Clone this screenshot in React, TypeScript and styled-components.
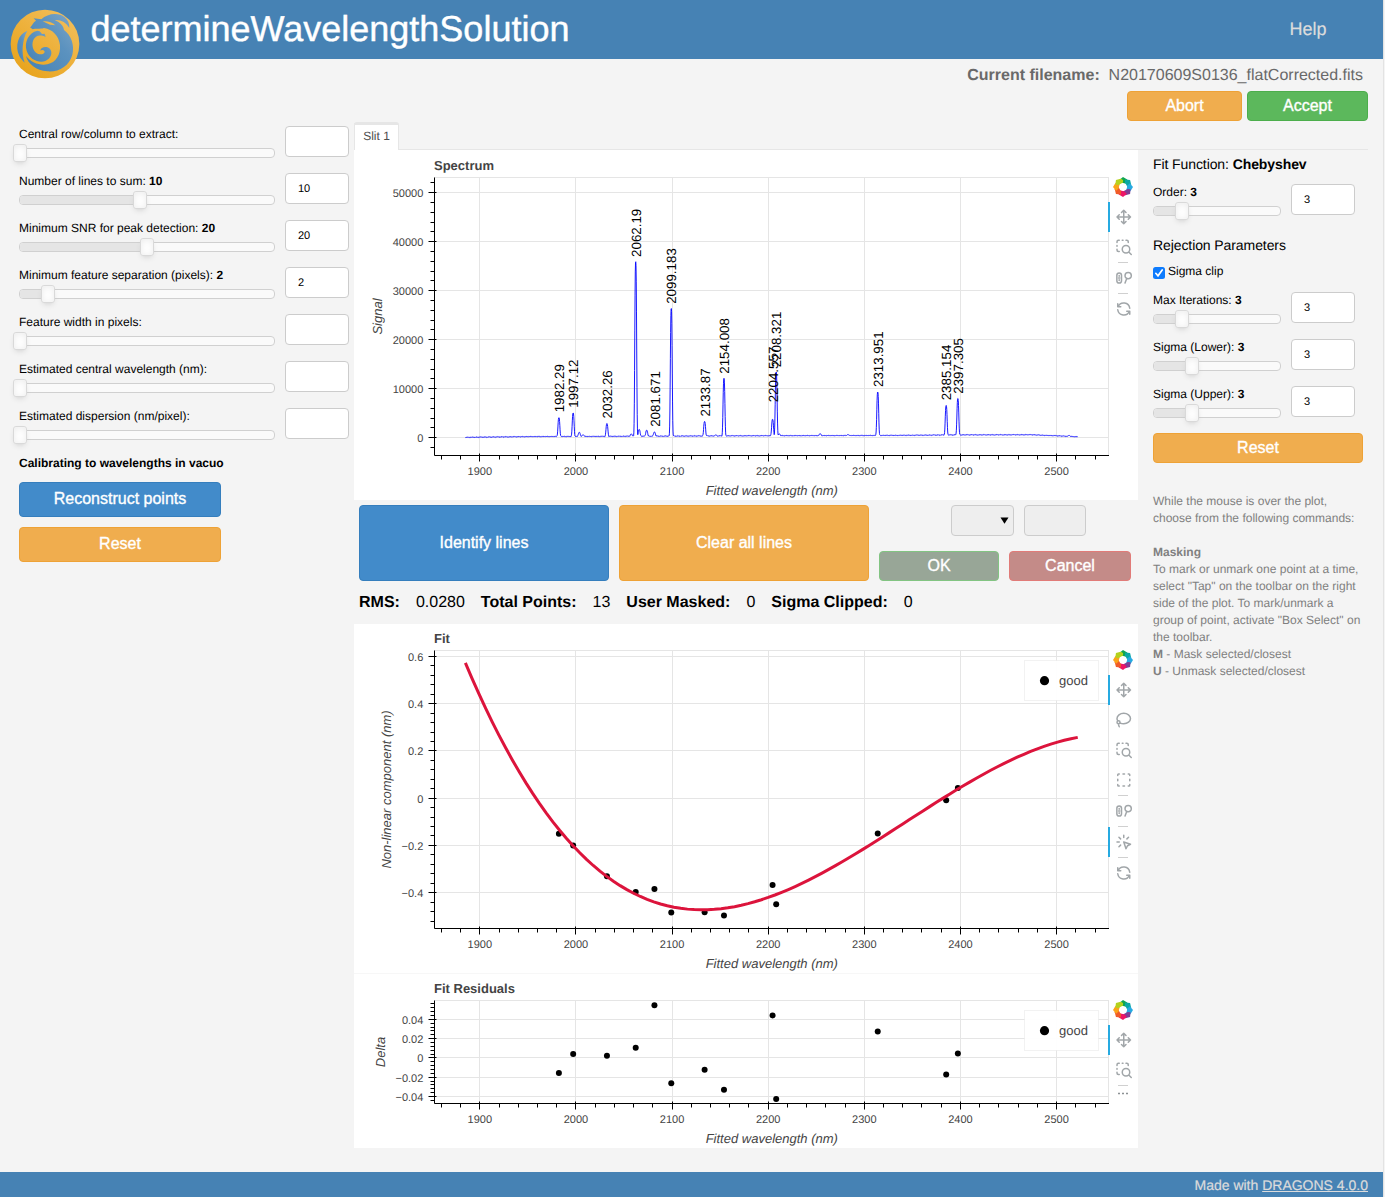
import React from 'react';
import styled, { createGlobalStyle } from 'styled-components';

const GlobalStyle = createGlobalStyle`
  body {
    margin: 0;
    background: #f4f4f4;
    font-family: "Liberation Sans", Arial, Helvetica, sans-serif;
    text-rendering: geometricPrecision;
  }
  *, *::before, *::after { box-sizing: border-box; }
`;

/* ---------- page shell ---------- */

const Page = styled.div`
  display: flex;
  flex-direction: column;
  width: 1384px;
  height: 1197px;
  border-right: 1px solid #e3e3e3;
  background: #f4f4f4;
  color: #000;
  font-size: 12px;
`;

const Header = styled.header`
  display: flex;
  align-items: flex-start;
  height: 59px;
  flex: none;
  padding: 9px 56.5px 0 10px;
  background: #4682b4;
`;

const Title = styled.h1`
  flex: 1;
  margin: 0 0 0 10.5px;
  font-size: 36px;
  font-weight: 400;
  line-height: 40px;
  color: #fff;
  -webkit-text-stroke: 0.4px #fff;
`;

const HelpLink = styled.a`
  font-size: 18px;
  line-height: 40px;
  color: #dcdcdc;
  -webkit-text-stroke: 0.2px #dcdcdc;
`;

const FileBar = styled.div`
  display: flex;
  justify-content: flex-end;
  flex: none;
  height: 32px;
  padding: 1px 20px 0 0;
  font-size: 16px;
  line-height: 31px;
  color: #696969;
  white-space: pre;
`;

const Actions = styled.div`
  display: flex;
  justify-content: flex-end;
  flex: none;
  gap: 5px;
  padding-right: 15px;
`;

const Main = styled.main`
  display: flex;
  flex: 1;
  min-height: 0;
`;

const Footer = styled.footer`
  flex: none;
  height: 25px;
  padding-right: 15px;
  background: #4682b4;
  color: #dcdcdc;
  font-size: 14px;
  line-height: 26px;
  text-align: right;
  -webkit-text-stroke: 0.2px #dcdcdc;
`;

const FooterLink = styled.a`
  text-decoration: underline;
`;

/* ---------- buttons and inputs ---------- */

type Tone = 'primary' | 'warning' | 'success' | 'mutedOk' | 'mutedCancel';

const tones: Record<Tone, [string, string]> = {
  primary: ['#428bca', '#357ebd'],
  warning: ['#f0ad4e', '#eea236'],
  success: ['#5cb85c', '#4cae4c'],
  mutedOk: ['#98a697', '#82c482'],
  mutedCancel: ['#c48b88', '#e17b78'],
};

const Button = styled.button<{ $tone: Tone; $w: number; $h: number }>`
  width: ${(p) => p.$w}px;
  height: ${(p) => p.$h}px;
  padding: 0 0 ${(p) => (p.$h % 2 ? 2 : 0)}px;
  border: 1px solid ${(p) => tones[p.$tone][1]};
  border-radius: 4px;
  background: ${(p) => tones[p.$tone][0]};
  color: #fff;
  font-family: inherit;
  font-size: 16px;
  line-height: 1;
  -webkit-text-stroke: 0.35px #fff;
`;

const Field = styled.div<{ $w?: number; $disabled?: boolean }>`
  display: flex;
  align-items: center;
  width: ${(p) => p.$w ?? 64}px;
  height: 31px;
  padding: 0 12px;
  border: 1px solid #ccc;
  border-radius: 4px;
  background: ${(p) => (p.$disabled ? '#eee' : '#fff')};
  font-size: 11px;
`;

const SelectField = styled(Field)`
  justify-content: flex-end;
  padding-right: 4.5px;
`;

/* ---------- sliders ---------- */

const SliderRow = styled.div`
  display: flex;
  gap: 10px;
  height: 47px;
`;

const SliderBox = styled.div<{ $w: number }>`
  width: ${(p) => p.$w}px;
`;

const SliderLabel = styled.div`
  height: 22px;
  line-height: 16px;
  white-space: nowrap;
`;

const Track = styled.div`
  position: relative;
  height: 10px;
  border: 1px solid #d0d0d0;
  border-radius: 4px;
  background: #fafafa;
`;

const Filled = styled.div`
  height: 8px;
  border-radius: 3px 0 0 3px;
  background: #e5e5e5;
`;

const Handle = styled.div`
  position: absolute;
  top: -5px;
  width: 14px;
  height: 18px;
  margin-left: -7px;
  border: 1px solid #d9d9d9;
  border-radius: 3px;
  background: #fff;
  box-shadow: inset 0 0 1px #fff, inset 0 1px 7px #ebebeb, 0 3px 6px -3px #bbb;
`;

interface SliderProps {
  label: string;
  value?: string;
  width?: number;
  at?: number;
}

function Slider({ label, value, width = 256, at = 0 }: SliderProps) {
  return (
    <SliderRow>
      <SliderBox $w={width}>
        <SliderLabel>
          {label} {value && <b>{value}</b>}
        </SliderLabel>
        <Track>
          <Filled style={{ width: at }} />
          <Handle style={{ left: at }} />
        </Track>
      </SliderBox>
      <Field>{value}</Field>
    </SliderRow>
  );
}

/* ---------- columns ---------- */

const LeftColumn = styled.section`
  width: 354px;
  padding: 5px 0 0 19px;
`;

const Notice = styled.div`
  height: 27px;
  line-height: 16px;
  font-weight: 700;
`;

const Stack = styled.div<{ $gap: number }>`
  display: flex;
  flex-direction: column;
  gap: ${(p) => p.$gap}px;
`;

const Content = styled.section`
  width: 1014px;
`;

const TabBar = styled.div`
  display: flex;
  height: 29px;
  padding-top: 1px;
  border-bottom: 1px solid #e6e6e6;
`;

const Tab = styled.div`
  width: 45px;
  height: 28px;
  border: 1px solid #e6e6e6;
  border-top-width: 3px;
  border-bottom: 0;
  border-radius: 3px 3px 0 0;
  background: #fff;
  color: #4d4d4d;
  line-height: 22px;
  text-align: center;
`;

const TabBody = styled.div`
  display: flex;
`;

const Plots = styled.div`
  width: 784px;
`;

const RightColumn = styled.aside`
  width: 230px;
  padding: 6px 0 0 15px;
`;

const Heading = styled.div<{ $h: number; $top?: number }>`
  height: ${(p) => p.$h}px;
  margin-top: ${(p) => p.$top ?? 0}px;
  font-size: 14px;
  line-height: 17px;
  letter-spacing: -0.09px;
`;

const CheckRow = styled.label`
  display: flex;
  align-items: flex-start;
  gap: 3px;
  height: 29px;
  line-height: 16px;
`;

const CheckMark = styled.span`
  display: flex;
  width: 12px;
  height: 12px;
  margin-top: 4px;
  border-radius: 2.5px;
  background: #0d7bfd;
`;

const Hints = styled.div`
  margin-top: 30px;
  width: 212px;
  color: #808080;
  line-height: 17px;
`;

const EditRow = styled.div`
  display: flex;
  gap: 10px;
  padding: 5px;
  height: 86px;
`;

const EditPanel = styled.div`
  display: flex;
  flex-direction: column;
  justify-content: space-between;
  width: 252px;
`;

const EditFields = styled.div`
  display: flex;
  gap: 10px;
  padding-left: 72px;
`;

const EditButtons = styled.div`
  display: flex;
  gap: 10px;
`;

const Stats = styled.div`
  display: flex;
  gap: 16px;
  height: 38px;
  padding-left: 5px;
  font-size: 16px;
  line-height: 34px;
`;

/* ---------- chart toolbar ---------- */

const PlotPanel = styled.div<{ $h: number; $line?: boolean }>`
  display: flex;
  height: ${(p) => p.$h}px;
  background: #fff;
  border-bottom: ${(p) => (p.$line ? '1px solid #f7f7f7' : '0')};
`;

const PlotCanvas = styled.svg`
  flex: none;
  overflow: visible;
`;

const Toolbar = styled.div<{ $top: number }>`
  display: flex;
  flex-direction: column;
  align-items: center;
  width: 30px;
  padding-top: ${(p) => p.$top}px;
  z-index: 1;
`;

const ToolButton = styled.div<{ $active?: boolean }>`
  display: flex;
  align-items: center;
  justify-content: center;
  width: 30px;
  height: 30px;
  padding-right: ${(p) => (p.$active ? 2 : 0)}px;
  border-left: ${(p) => (p.$active ? '2px solid #26aae1' : '0')};
`;

const ToolRule = styled.div`
  width: 10px;
  height: 1px;
  background: #d0d0d0;
`;

type Tool = 'pan' | 'lasso' | 'boxZoom' | 'boxSelect' | 'wheel' | 'tap' | 'reset' | 'rule' | 'more';

const toolPaths: Record<string, string> = {
  pan: 'M18 9l3 3l-3 3M3 12h18M6 9l-3 3l3 3M9 18l3 3l3-3M12 3v18M15 6l-3-3l-3 3',
  lasso:
    'M4.03 13.25C3.37 12.28 3 11.17 3 10c0-3.87 4.03-7 9-7s9 3.13 9 7s-4.03 7-9 7c-1.91 0-3.69-.46-5.14-1.26M3 15a2 2 0 1 0 4 0a2 2 0 1 0-4 0M5 17c0 1.42.32 2.8 1 4',
  boxZoom:
    'M10 15a5 5 0 1 0 10 0a5 5 0 1 0-10 0M22 22l-3-3M6 18h-1a2 2 0 0 1-2-2v-1M3 11v-1M3 6v-1a2 2 0 0 1 2-2h1M10 3h1M15 3h1a2 2 0 0 1 2 2v1',
  boxSelect:
    'M4 6v-1a1 1 0 0 1 1-1h1M11 4h2M18 4h1a1 1 0 0 1 1 1v1M20 11v2M20 18v1a1 1 0 0 1-1 1h-1M13 20h-2M6 20h-1a1 1 0 0 1-1-1v-1M4 13v-2',
  wheel:
    'M2.8 8.4a3.1 3.1 0 0 1 6.2 0v7.2a3.1 3.1 0 0 1-6.2 0zM5.9 8.6v1M5.9 14.4v1M5.2 12h1.4M13.7 8.9a4.2 4.2 0 1 0 8.4 0a4.2 4.2 0 1 0-8.4 0M16 12.8l-2.3 6',
  tap: 'M3 12h3M12 3v3M7.8 7.8l-2.2-2.2M16.2 7.8l2.2-2.2M7.8 16.2l-2.2 2.2M12 12l9 3l-4 2l-2 4z',
  reset: 'M20 11a8.1 8.1 0 0 0-15.5-2M4 5v4h4M4 13a8.1 8.1 0 0 0 15.5 2M20 19v-4h-4',
};

const petals = ['#10a650', '#0ba8a4', '#26aae1', '#803c96', '#ed1566', '#f05a28', '#faa41a', '#b4d21e'];

function RingLogo() {
  return (
    <svg width="20" height="20" viewBox="-10 -10 20 20">
      {petals.map((fill, i) => (
        <polygon key={fill} points="-3.8,-6.9 0,-10 4.2,-7.4 5,-5 3.2,-3.2 -1.8,-4.6" fill={fill} transform={`rotate(${i * 45})`} />
      ))}
    </svg>
  );
}

function ToolStrip({ top, tools, active }: { top: number; tools: Tool[]; active: Tool[] }) {
  return (
    <Toolbar $top={top}>
      <ToolButton>
        <RingLogo />
      </ToolButton>
      {tools.map((tool, i) => {
        if (tool === 'rule') return <ToolRule key={i} />;
        if (tool === 'more') {
          return (
            <svg key={i} width="10" height="14" viewBox="0 0 10 14">
              <path d="M0 7.5h2M4 7.5h2M8 7.5h2" stroke="#8c9194" strokeWidth="1.6" />
            </svg>
          );
        }
        return (
          <ToolButton key={i} $active={active.includes(tool)}>
            <svg
              width="18"
              height="18"
              viewBox="-1 0 24 24"
              fill="none"
              stroke="#a1a6a9"
              strokeWidth="2"
              strokeLinecap="round"
              strokeLinejoin="round"
              overflow="visible"
            >
              <path d={toolPaths[tool]} />
            </svg>
          </ToolButton>
        );
      })}
    </Toolbar>
  );
}

/* ---------- charts ---------- */

const FRAME_LEFT = 80.5;
const FRAME_RIGHT = 754.5;
const xPos = (nm: number) => 125.8 + (nm - 1900) * 0.9613;
const snap = (v: number) => Math.floor(v) + 0.5;

interface AxesProps {
  title: string;
  yLabel: string;
  yLabelX: number;
  top: number;
  bottom: number;
  zero: number;
  scale: number;
  major: number[];
  minorStep: number;
  format?: (v: number) => string;
}

function Axes({ title, yLabel, yLabelX, top, bottom, zero, scale, major, minorStep, format = String }: AxesProps) {
  const yPos = (v: number) => zero - v * scale;
  const minorY: number[] = [];
  for (let k = -60; k <= 60; k++) {
    const y = yPos(k * minorStep);
    if (y > top && y < bottom) minorY.push(y);
  }
  const majorX = [1900, 2000, 2100, 2200, 2300, 2400, 2500];
  const minorX: number[] = [];
  for (let v = 1860; v <= 2540; v += 20) minorX.push(v);
  const midY = (top + bottom) / 2;
  return (
    <g>
      <g stroke="#e5e5e5" fill="none">
        {majorX.map((v) => (
          <line key={v} x1={snap(xPos(v))} x2={snap(xPos(v))} y1={top} y2={bottom} />
        ))}
        {major.map((v) => (
          <line key={v} x1={FRAME_LEFT} x2={FRAME_RIGHT} y1={snap(yPos(v))} y2={snap(yPos(v))} />
        ))}
        <rect x={FRAME_LEFT} y={top} width={FRAME_RIGHT - FRAME_LEFT} height={bottom - top} />
      </g>
      <g stroke="#000">
        <path d={`M${FRAME_LEFT} ${top}V${bottom}H${FRAME_RIGHT + 0.5}`} fill="none" />
        {majorX.map((v) => (
          <line key={v} x1={snap(xPos(v))} x2={snap(xPos(v))} y1={bottom - 2} y2={bottom + 6} />
        ))}
        {minorX.map((v) => (
          <line key={v} x1={snap(xPos(v))} x2={snap(xPos(v))} y1={bottom} y2={bottom + 4} />
        ))}
        {major.map((v) => (
          <line key={v} x1={FRAME_LEFT - 6} x2={FRAME_LEFT + 2} y1={snap(yPos(v))} y2={snap(yPos(v))} />
        ))}
        {minorY.map((y) => (
          <line key={y} x1={FRAME_LEFT - 4} x2={FRAME_LEFT} y1={snap(y)} y2={snap(y)} />
        ))}
      </g>
      <g fill="#444" fontSize="11">
        {majorX.map((v) => (
          <text key={v} x={xPos(v)} y={bottom + 19.5} textAnchor="middle">
            {v}
          </text>
        ))}
        {major.map((v) => (
          <text key={v} x="69.3" y={snap(yPos(v)) + 4.2} textAnchor="end">
            {format(v)}
          </text>
        ))}
      </g>
      <g fill="#444" fontSize="13">
        <text x="80" y={top - 7.5} fontWeight="700">
          {title}
        </text>
        <text x="417.8" y={bottom + 39.5} textAnchor="middle" fontStyle="italic">
          Fitted wavelength (nm)
        </text>
        <text transform={`translate(${yLabelX} ${midY}) rotate(-90)`} textAnchor="middle" fontStyle="italic">
          {yLabel}
        </text>
      </g>
    </g>
  );
}

const signed = (v: number) => String(v).replace('-', '\u2212');

/* arc lines: wavelength, label, top of the peak, foot of the label */
const lines: [number, string, number, number][] = [
  [1982.29, '1982.29', 267.7, 262.3],
  [1997.12, '1997.12', 263, 257.7],
  [2032.26, '2032.26', 273.5, 268.4],
  [2062.19, '2062.19', 111.7, 106.9],
  [2081.671, '2081.671', 282, 276.8],
  [2099.183, '2099.183', 158.5, 153.8],
  [2133.87, '2133.87', 271.5, 266.6],
  [2154.008, '2154.008', 228.3, 223.7],
  [2204.557, '2204.557', 269.3, 252.3],
  [2208.321, '2208.321', 222, 217.3],
  [2313.951, '2313.951', 242, 237],
  [2385.154, '2385.154', 255.5, 250.3],
  [2397.305, '2397.305', 248.5, 243.7],
];

const faint: [number, number][] = [
  [2003.5, 282.3], [2007.5, 284.8], [2057.5, 284], [2065.8, 279.5], [2073.6, 280.2],
  [2145.5, 285], [2211.6, 284], [2254, 283.7], [2283, 284.6], [2513, 285.4],
];

const continuum = (nm: number) => {
  const knots: [number, number][] = [
    [1885, 287.3], [1960, 286.6], [2060, 286.2], [2180, 285.8], [2300, 285.5],
    [2400, 284.9], [2475, 284.8], [2505, 286], [2523, 286.9],
  ];
  const i = Math.max(1, knots.findIndex(([k]) => nm <= k));
  const [x0, y0] = knots[i - 1];
  const [x1, y1] = knots[i];
  return y0 + ((nm - x0) / (x1 - x0)) * (y1 - y0);
};

const spectrumPath = (() => {
  const peaks = [...lines.map(([nm, , y]) => [nm, y] as [number, number]), ...faint];
  const points: string[] = [];
  for (let i = 0; 1885 + i * 0.25 <= 2522; i++) {
    const nm = 1885 + i * 0.25;
    const base = continuum(nm) + Math.sin(i * 1.15) * 0.3 + Math.sin(i * 0.36) * 0.2;
    let y = base;
    for (const [centre, peak] of peaks) {
      const d = Math.abs(nm - centre);
      if (d < 5) y = Math.min(y, base - (base - peak) * Math.exp(-Math.pow(d / 1.2, 2.8)));
    }
    points.push(`${xPos(nm).toFixed(2)} ${y.toFixed(2)}`);
  }
  return `M${points.join('L')}`;
})();

function SpectrumPlot() {
  return (
    <PlotCanvas width="754" height="350">
      <Axes
        title="Spectrum"
        yLabel="Signal"
        yLabelX={28}
        top={27.5}
        bottom={305.5}
        zero={287.6}
        scale={0.0049}
        major={[0, 10000, 20000, 30000, 40000, 50000]}
        minorStep={2000}
      />
      <path d={spectrumPath} fill="none" stroke="#00f" strokeOpacity="0.9" strokeLinejoin="bevel" />
      <g fontSize="13.33" fill="#000">
        {lines.map(([nm, text, , y]) => (
          <text key={text} transform={`translate(${xPos(nm) + 5.2} ${y}) rotate(-90)`}>
            {text}
          </text>
        ))}
      </g>
    </PlotCanvas>
  );
}

const fitted = [-0.15, -0.2, -0.33, -0.397, -0.384, -0.484, -0.483, -0.497, -0.367, -0.449, -0.149, -0.0085, 0.0436];
const residuals = [
  -0.0157, 0.004, 0.0022, 0.0105, 0.0546, -0.0263, -0.0123, -0.0331, 0.044, -0.0426, 0.0274, -0.0172, 0.0046,
];

const cubic = (nm: number) => {
  const t = (nm - 1885) * 0.009613;
  return 0.5728 - 0.63878 * t + 0.16888 * t * (t - 1.417) - 0.02202 * t * (t - 1.417) * (t - 4.121);
};

function Legend() {
  return (
    <g>
      <rect x="670.5" y="36.5" width="74" height="40" fill="#fff" fillOpacity="0.95" stroke="#e5e5e5" strokeOpacity="0.5" />
      <circle cx="690.5" cy="56.7" r="4.6" />
      <text x="705" y="61.3" fontSize="13" fill="#444">
        good
      </text>
    </g>
  );
}

function FitPlot() {
  const zero = 174.2;
  const scale = 236.2;
  const curve: string[] = [];
  for (let nm = 1885; nm <= 2522; nm += 7) curve.push(`${xPos(nm).toFixed(2)} ${(zero - cubic(nm) * scale).toFixed(2)}`);
  return (
    <PlotCanvas width="754" height="349">
      <Axes
        title="Fit"
        yLabel="Non-linear component (nm)"
        yLabelX={37}
        top={26.5}
        bottom={304.5}
        zero={zero}
        scale={scale}
        major={[0.6, 0.4, 0.2, 0, -0.2, -0.4]}
        minorStep={0.04}
        format={signed}
      />
      {lines.map(([nm], i) => (
        <circle key={nm} cx={xPos(nm)} cy={zero - fitted[i] * scale} r="3" />
      ))}
      <path d={`M${curve.join('L')}`} fill="none" stroke="#dc143c" strokeWidth="3" />
      <Legend />
    </PlotCanvas>
  );
}

function ResidualPlot() {
  const zero = 83.9;
  const scale = 964;
  return (
    <PlotCanvas width="754" height="174">
      <Axes
        title="Fit Residuals"
        yLabel="Delta"
        yLabelX={30.5}
        top={26.5}
        bottom={129.5}
        zero={zero}
        scale={scale}
        major={[0.04, 0.02, 0, -0.02, -0.04]}
        minorStep={0.004}
        format={signed}
      />
      {lines.map(([nm], i) => (
        <circle key={nm} cx={xPos(nm)} cy={zero - residuals[i] * scale} r="3" />
      ))}
      <Legend />
    </PlotCanvas>
  );
}

/* ---------- brand mark ---------- */

const BrandMark = styled.svg`
  flex: none;
`;

function DragonLogo() {
  return (
    <BrandMark width="70" height="70" viewBox="30 27 210 210">
      <defs>
        <linearGradient id="gold" x1="0" y1="1" x2="0.8" y2="0">
          <stop offset="0" stopColor="#e7a013" />
          <stop offset="1" stopColor="#f2be5b" />
        </linearGradient>
        <linearGradient id="scale" x1="0" y1="1" x2="1" y2="0">
          <stop offset="0" stopColor="#4682b4" />
          <stop offset="0.6" stopColor="#5b92bf" />
          <stop offset="1" stopColor="#7fa6c8" />
        </linearGradient>
      </defs>
      <circle cx="135" cy="132" r="103" fill="url(#gold)" />
      <g fill="url(#scale)">
        <path d="M90 82C98 76 98 68 108 62L101 55L124 58C142 40 176 36 194 52C204 60 209 72 208 84C198 66 182 58 164 60C182 68 190 78 192 90C214 106 224 136 217 164C208 198 176 217 142 214C108 211 84 192 78 168C94 188 118 197 142 193C168 188 182 164 180 136C177 108 158 88 132 84C120 88 106 84 98 88Z" />
        <path d="M82 92C54 102 44 138 58 168C62 176 68 182 74 188C64 158 66 122 82 92Z" />
        <path d="M112 92C86 98 72 126 80 152C88 178 116 190 136 183C154 176 160 156 148 145C140 138 122 140 121 152C126 148 134 150 134 156C132 164 118 166 108 158C94 146 94 120 108 110C116 105 126 106 137 111L134 101L126 102L119 94Z" />
      </g>
      <path d="M128 64C142 62 156 66 166 76L150 74Z" fill="#f0b748" />
    </BrandMark>
  );
}

/* ---------- page ---------- */

export default function App() {
  return (
    <Page>
      <GlobalStyle />
      <Header>
        <DragonLogo />
        <Title>determineWavelengthSolution</Title>
        <HelpLink>Help</HelpLink>
      </Header>
      <FileBar>
        <b>Current filename:</b>
        {'  N20170609S0136_flatCorrected.fits'}
      </FileBar>
      <Actions>
        <Button $tone="warning" $w={115} $h={30}>Abort</Button>
        <Button $tone="success" $w={121} $h={30}>Accept</Button>
      </Actions>
      <Main>
        <LeftColumn>
          <Slider label="Central row/column to extract:" at={0} />
          <Slider label="Number of lines to sum:" value="10" at={120} />
          <Slider label="Minimum SNR for peak detection:" value="20" at={127} />
          <Slider label="Minimum feature separation (pixels):" value="2" at={28} />
          <Slider label="Feature width in pixels:" at={0} />
          <Slider label="Estimated central wavelength (nm):" at={0} />
          <Slider label="Estimated dispersion (nm/pixel):" at={0} />
          <Notice>Calibrating to wavelengths in vacuo</Notice>
          <Stack $gap={10}>
            <Button $tone="primary" $w={202} $h={35}>Reconstruct points</Button>
            <Button $tone="warning" $w={202} $h={35}>Reset</Button>
          </Stack>
        </LeftColumn>
        <Content>
          <TabBar>
            <Tab>Slit 1</Tab>
          </TabBar>
          <TabBody>
            <Plots>
              <PlotPanel $h={350}>
                <SpectrumPlot />
                <ToolStrip top={22} tools={['pan', 'boxZoom', 'rule', 'wheel', 'rule', 'reset']} active={['pan']} />
              </PlotPanel>
              <EditRow>
                <Button $tone="primary" $w={250} $h={76}>Identify lines</Button>
                <Button $tone="warning" $w={250} $h={76}>Clear all lines</Button>
                <EditPanel>
                  <EditFields>
                    <SelectField $w={63} $disabled>
                      <svg width="9" height="7" viewBox="0 0 9 7">
                        <path d="M0.5 0.5h8L4.5 6.7z" />
                      </svg>
                    </SelectField>
                    <Field $w={62} $disabled />
                  </EditFields>
                  <EditButtons>
                    <Button $tone="mutedOk" $w={120} $h={30}>OK</Button>
                    <Button $tone="mutedCancel" $w={122} $h={30}>Cancel</Button>
                  </EditButtons>
                </EditPanel>
              </EditRow>
              <Stats>
                <b>RMS:</b>
                <span>0.0280</span>
                <b>Total Points:</b>
                <span>13</span>
                <b>User Masked:</b>
                <span>0</span>
                <b>Sigma Clipped:</b>
                <span>0</span>
              </Stats>
              <PlotPanel $h={350} $line>
                <FitPlot />
                <ToolStrip
                  top={21}
                  tools={['pan', 'lasso', 'boxZoom', 'boxSelect', 'rule', 'wheel', 'rule', 'tap', 'rule', 'reset']}
                  active={['pan', 'tap']}
                />
              </PlotPanel>
              <PlotPanel $h={174}>
                <ResidualPlot />
                <ToolStrip top={21} tools={['pan', 'boxZoom', 'rule', 'more']} active={['pan']} />
              </PlotPanel>
            </Plots>
            <RightColumn>
              <Heading $h={28}>
                Fit Function: <b>Chebyshev</b>
              </Heading>
              <Slider label="Order:" value="3" width={128} at={28} />
              <Heading $h={26} $top={6}>Rejection Parameters</Heading>
              <CheckRow>
                <CheckMark>
                  <svg width="12" height="12" viewBox="0 0 12 12">
                    <path d="M2.8 6.3L5 8.8L9.2 3" fill="none" stroke="#fff" strokeWidth="1.7" strokeLinecap="round" />
                  </svg>
                </CheckMark>
                Sigma clip
              </CheckRow>
              <Slider label="Max Iterations:" value="3" width={128} at={28} />
              <Slider label="Sigma (Lower):" value="3" width={128} at={38} />
              <Slider label="Sigma (Upper):" value="3" width={128} at={38} />
              <Button $tone="warning" $w={210} $h={30}>Reset</Button>
              <Hints>
                While the mouse is over the plot,
                <br />
                choose from the following commands:
                <br />
                <br />
                <b>Masking</b>
                <br />
                To mark or unmark one point at a time, select "Tap" on the toolbar on the right side of the plot. To
                mark/unmark a group of point, activate "Box Select" on the toolbar.
                <br />
                <b>M</b> - Mask selected/closest
                <br />
                <b>U</b> - Unmask selected/closest
              </Hints>
            </RightColumn>
          </TabBody>
        </Content>
      </Main>
      <Footer>
        Made with <FooterLink>DRAGONS 4.0.0</FooterLink>
      </Footer>
    </Page>
  );
}
